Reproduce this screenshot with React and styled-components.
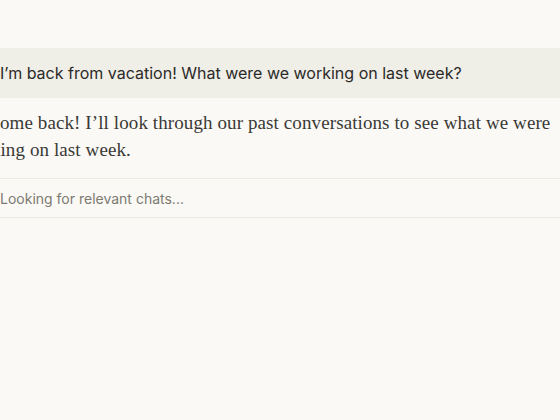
import React from "react";
import styled, { createGlobalStyle } from "styled-components";

const Global = createGlobalStyle`
  html, body { margin: 0; padding: 0; background: #FAF9F5; }
  body { width: 560px; height: 420px; overflow: hidden; }
`;

const Page = styled.div`
  width: 560px;
  height: 420px;
  overflow: hidden;
  background: #FAF9F5;
  padding-top: 48px;
  box-sizing: border-box;
`;

const Thread = styled.div`
  margin-left: -40px;
  width: 620px;
  display: flex;
  flex-direction: column;
`;

const UserBubble = styled.div`
  background: #EFEEE7;
  height: 50px;
  display: flex;
  align-items: center;
  padding-left: 40px;
  font-family: "Inter", sans-serif;
  font-size: 16px;
  color: #2b2a27;
`;

const Reply = styled.p`
  margin: 11px 0 0 0;
  padding-left: 1px;
  width: 619px;
  font-family: "Liberation Serif", serif;
  font-size: 19px;
  letter-spacing: 0.1px;
  line-height: 27px;
  color: #3a3935;
`;

const ToolRow = styled.div`
  margin-top: 15px;
  margin-left: 20px;
  border-top: 1px solid #ECEAE3;
  border-bottom: 1px solid #ECEAE3;
  height: 38px;
  display: flex;
  align-items: center;
  padding-left: 20px;
  font-family: "Inter", sans-serif;
  font-size: 14px;
  color: #7D7A72;
`;

export default function App() {
  return (
    <Page>
      <Global />
      <Thread>
        <UserBubble>I’m back from vacation! What were we working on last week?</UserBubble>
        <Reply>
          Welcome back! I’ll look through our past conversations to see what we were working on last week.
        </Reply>
        <ToolRow>Looking for relevant chats...</ToolRow>
      </Thread>
    </Page>
  );
}
